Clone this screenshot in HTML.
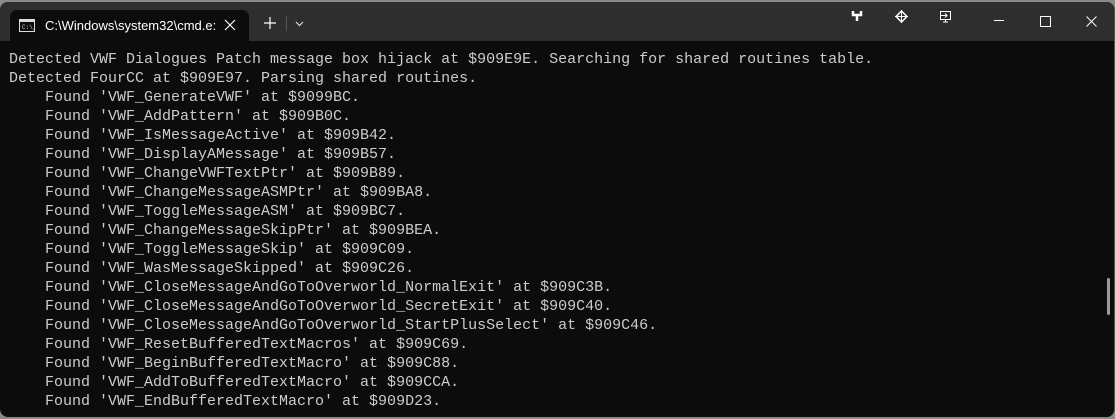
<!DOCTYPE html>
<html><head><style>
html,body{margin:0;padding:0;width:1115px;height:419px;overflow:hidden;background:#8a8a8a;}
.win{position:absolute;left:0;top:2px;width:1114px;height:415px;background:#0c0c0c;border-radius:8px 8px 8px 8px;overflow:hidden;border-right:1px solid #555;}
.title{position:absolute;left:0;top:0;width:100%;height:39px;background:#2e2e2e;}
.tab{position:absolute;left:10px;top:8px;width:239px;height:32px;background:#0c0c0c;border-radius:7px 7px 0 0;}
.tab span{position:absolute;left:35px;top:8px;font:13px "Liberation Sans",sans-serif;color:#fff;width:175px;overflow:hidden;white-space:nowrap;}
.term{position:absolute;left:9px;top:48px;font:15px/19px "Liberation Mono",monospace;color:#cccccc;white-space:pre;}
.sb{position:absolute;left:1107px;top:276px;width:3px;height:37px;background:#9a9a9a;border-radius:2px;}
</style></head><body>
<div class="win">
<div class="title">
 <div class="tab">
  <svg style="position:absolute;left:9px;top:9px" width="16" height="13"><rect x="0.5" y="0.5" width="15" height="12" fill="none" stroke="#ddd"/><rect x="1" y="1" width="14" height="2" fill="#ddd"/><text x="3" y="10" font-size="6" fill="#ddd" font-family="Liberation Mono">C:\_</text></svg>
  <span>C:\Windows\system32\cmd.e:</span>
  <svg style="position:absolute;left:214px;top:9px" width="12" height="12"><path d="M1 1L11 11M11 1L1 11" stroke="#fff" stroke-width="1.2"/></svg>
 </div>
 <svg style="position:absolute;left:264px;top:15px" width="12" height="12"><path d="M6 0V12M0 6H12" stroke="#fff" stroke-width="1.2"/></svg>
 <div style="position:absolute;left:286px;top:14px;width:1px;height:15px;background:#555"></div>
 <svg style="position:absolute;left:295px;top:19px" width="9" height="6"><path d="M1 1L4.5 4.5L8 1" stroke="#ddd" fill="none" stroke-width="1.2"/></svg>
 <svg style="position:absolute;left:851px;top:8px" width="12" height="12"><path d="M2 1V5H10V1M6 5V11" stroke="#fff" stroke-width="2.5" fill="none"/></svg>
 <svg style="position:absolute;left:895px;top:8px" width="13" height="13"><path d="M6.5 1L12 6.5L6.5 12L1 6.5Z" stroke="#fff" stroke-width="1.5" fill="none"/><path d="M6.5 0V13M0 6.5H13" stroke="#fff" stroke-width="1"/></svg>
 <svg style="position:absolute;left:939px;top:8px" width="13" height="14"><rect x="1.5" y="1.5" width="10" height="8" fill="none" stroke="#fff"/><path d="M4 12H9M6.5 10V12M2 5.5H8M6 3.5L8 5.5L6 7.5" stroke="#fff" fill="none"/></svg>
 <div style="position:absolute;left:994px;top:18px;width:10px;height:1px;background:#fff"></div>
 <div style="position:absolute;left:1040px;top:14px;width:9px;height:9px;border:1px solid #fff"></div>
 <svg style="position:absolute;left:1086px;top:14px" width="11" height="11"><path d="M0.5 0.5L10.5 10.5M10.5 0.5L0.5 10.5" stroke="#fff" stroke-width="1"/></svg>
</div>
<div class="term">Detected VWF Dialogues Patch message box hijack at $909E9E. Searching for shared routines table.
Detected FourCC at $909E97. Parsing shared routines.
    Found 'VWF_GenerateVWF' at $9099BC.
    Found 'VWF_AddPattern' at $909B0C.
    Found 'VWF_IsMessageActive' at $909B42.
    Found 'VWF_DisplayAMessage' at $909B57.
    Found 'VWF_ChangeVWFTextPtr' at $909B89.
    Found 'VWF_ChangeMessageASMPtr' at $909BA8.
    Found 'VWF_ToggleMessageASM' at $909BC7.
    Found 'VWF_ChangeMessageSkipPtr' at $909BEA.
    Found 'VWF_ToggleMessageSkip' at $909C09.
    Found 'VWF_WasMessageSkipped' at $909C26.
    Found 'VWF_CloseMessageAndGoToOverworld_NormalExit' at $909C3B.
    Found 'VWF_CloseMessageAndGoToOverworld_SecretExit' at $909C40.
    Found 'VWF_CloseMessageAndGoToOverworld_StartPlusSelect' at $909C46.
    Found 'VWF_ResetBufferedTextMacros' at $909C69.
    Found 'VWF_BeginBufferedTextMacro' at $909C88.
    Found 'VWF_AddToBufferedTextMacro' at $909CCA.
    Found 'VWF_EndBufferedTextMacro' at $909D23.</div>
<div class="sb"></div>
</div>
</body></html>
